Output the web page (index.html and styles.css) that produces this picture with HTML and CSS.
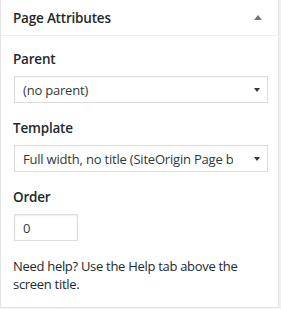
FILE: index.html
```html
<!DOCTYPE html>
<html lang="en">
<head>
    <meta charset="UTF-8">
    <meta name="viewport" content="width=device-width, initial-scale=1.0">
    <title>Page Attributes</title>
    <link rel="stylesheet" href="styles.css">
</head>
<body>
    <div class="postbox">
        <div class="postbox-header">
            <h2>Page Attributes</h2>
            <span class="toggle-arrow"></span>
        </div>
        <div class="inside">
            <div class="field">
                <label for="parent">Parent</label>
                <div class="select-wrap">
                    <select id="parent">
                        <option>(no parent)</option>
                    </select>
                </div>
            </div>
            <div class="field">
                <label for="template">Template</label>
                <div class="select-wrap">
                    <select id="template">
                        <option>Full width, no title (SiteOrigin Page builder)</option>
                    </select>
                </div>
            </div>
            <div class="field">
                <label for="order">Order</label>
                <input type="text" id="order" class="order-input" value="0">
            </div>
            <p class="help">Need help? Use the Help tab above the screen title.</p>
        </div>
    </div>
</body>
</html>
```

FILE: styles.css
```css
body {
    margin: 0;
    background-color: #f1f1f1;
    font-family: 'Open Sans', sans-serif;
    color: #23282d;
}
.postbox {
    width: 277px;
    margin-top: -1px;
    background-color: white;
    border: 1px solid #e5e5e5;
    box-shadow: 0 1px 1px rgba(0,0,0,0.04);
}
.postbox-header {
    height: 35px;
    display: flex;
    align-items: center;
    justify-content: space-between;
    padding: 0 16px 0 12px;
    border-bottom: 1px solid #eee;
}
.postbox-header h2 {
    margin: 0;
    font-size: 13.5px;
    font-weight: 600;
    letter-spacing: -0.2px;
}
.toggle-arrow {
    width: 0;
    height: 0;
    border-left: 4px solid transparent;
    border-right: 4px solid transparent;
    border-bottom: 5px solid #72777c;
}
.inside {
    padding: 14px 12px 14px;
    display: flex;
    flex-direction: column;
    gap: 16px;
}
.field {
    display: flex;
    flex-direction: column;
    gap: 7px;
}
label {
    font-size: 13.5px;
    font-weight: 600;
    line-height: 19px;
    letter-spacing: -0.2px;
}
.select-wrap {
    position: relative;
    margin-left: 1px;
    width: 254px;
}
.select-wrap::after {
    content: '';
    position: absolute;
    right: 8px;
    top: 12px;
    border-left: 3px solid transparent;
    border-right: 3px solid transparent;
    border-top: 4px solid #32373c;
    pointer-events: none;
}
select {
    appearance: none;
    -webkit-appearance: none;
    width: 100%;
    height: 27px;
    padding: 0 34px 0 8px;
    border: 1px solid #ddd;
    border-radius: 0;
    background-color: white;
    font-family: 'Open Sans', sans-serif;
    font-size: 13px;
    letter-spacing: -0.2px;
    color: #32373c;
    box-shadow: inset 0 1px 2px rgba(0,0,0,0.04);
}
.order-input {
    width: 64px;
    height: 27px;
    box-sizing: border-box;
    margin: 0 0 0 1px;
    padding: 0 8px;
    border: 1px solid #ddd;
    font-family: 'Open Sans', sans-serif;
    font-size: 13px;
    color: #32373c;
    box-shadow: inset 0 1px 2px rgba(0,0,0,0.07);
}
.help {
    margin: 0;
    font-size: 13px;
    line-height: 18px;
    letter-spacing: -0.3px;
}
```
